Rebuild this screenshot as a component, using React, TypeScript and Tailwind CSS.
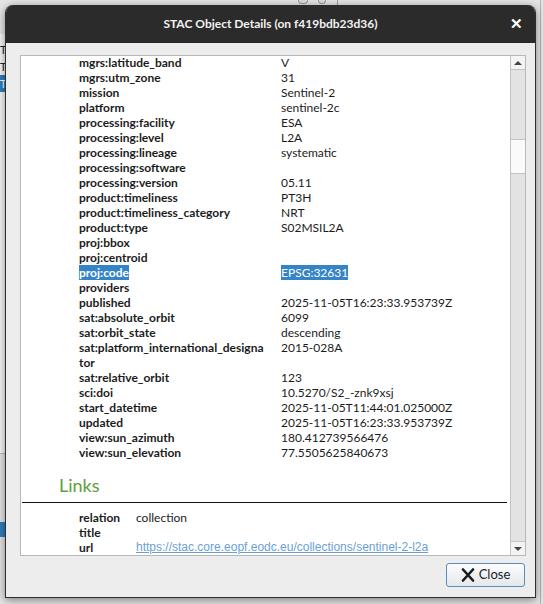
import React from 'react';

type Row = { key: string; value?: string; selected?: boolean; wrap?: [string, string] };

const rows: Row[] = [
  { key: 'mgrs:latitude_band', value: 'V' },
  { key: 'mgrs:utm_zone', value: '31' },
  { key: 'mission', value: 'Sentinel-2' },
  { key: 'platform', value: 'sentinel-2c' },
  { key: 'processing:facility', value: 'ESA' },
  { key: 'processing:level', value: 'L2A' },
  { key: 'processing:lineage', value: 'systematic' },
  { key: 'processing:software' },
  { key: 'processing:version', value: '05.11' },
  { key: 'product:timeliness', value: 'PT3H' },
  { key: 'product:timeliness_category', value: 'NRT' },
  { key: 'product:type', value: 'S02MSIL2A' },
  { key: 'proj:bbox' },
  { key: 'proj:centroid' },
  { key: 'proj:code', value: 'EPSG:32631', selected: true },
  { key: 'providers' },
  { key: 'published', value: '2025-11-05T16:23:33.953739Z' },
  { key: 'sat:absolute_orbit', value: '6099' },
  { key: 'sat:orbit_state', value: 'descending' },
  { key: 'sat:platform_international_designator', value: '2015-028A', wrap: ['sat:platform_international_designa', 'tor'] },
  { key: 'sat:relative_orbit', value: '123' },
  { key: 'sci:doi', value: '10.5270/S2_-znk9xsj' },
  { key: 'start_datetime', value: '2025-11-05T11:44:01.025000Z' },
  { key: 'updated', value: '2025-11-05T16:23:33.953739Z' },
  { key: 'view:sun_azimuth', value: '180.412739566476' },
  { key: 'view:sun_elevation', value: '77.5505625840673' },
];

function PropertyRow({ row }: { row: Row }) {
  const sel = row.selected ? 'bg-[#3584c6] text-white' : '';
  return (
    <div className="flex items-start">
      <div className="w-[202px] shrink-0 font-bold">
        {row.wrap ? (
          <>
            <div className="h-[15px]">{row.wrap[0]}</div>
            <div className="h-[15px]">{row.wrap[1]}</div>
          </>
        ) : (
          <span className={`inline-block h-[15px] ${sel}`}>{row.key}</span>
        )}
      </div>
      <div className="h-[15px]">
        {row.value ? <span className={`inline-block h-[15px] ${sel}`}>{row.value}</span> : null}
      </div>
    </div>
  );
}

function Scrollbar() {
  return (
    <div className="flex w-[15px] shrink-0 flex-col border-l border-[#c4c4c4] bg-[#e3e3e3]">
      <div className="flex h-[14px] items-center justify-center border-b border-[#c4c4c4] bg-[#f4f4f4]">
        <div className="h-0 w-0 border-x-[4px] border-b-[4px] border-x-transparent border-b-[#444]" />
      </div>
      <div className="h-[69px]" />
      <div className="h-[35px] border-y border-[#c4c4c4] bg-[#fafafa]" />
      <div className="flex-1" />
      <div className="flex h-[14px] items-center justify-center border-t border-[#c4c4c4] bg-[#f4f4f4]">
        <div className="h-0 w-0 border-x-[4px] border-t-[4px] border-x-transparent border-t-[#444]" />
      </div>
    </div>
  );
}

function CloseIcon() {
  return (
    <svg width="14" height="14" viewBox="0 0 14 14">
      <path d="M2 1.5 L12 12.5 M12 1.5 L2 12.5" stroke="#1a1a1a" strokeWidth="2.6" strokeLinecap="round" />
    </svg>
  );
}

export default function App() {
  return (
    <div className="relative h-[604px] w-[543px] overflow-hidden bg-[#e4e4e4] font-[Lato,sans-serif]">
      {/* window behind the dialog */}
      <div className="absolute left-0 top-[34px] h-[420px] w-[12px] border-b border-[#b9b9b9] bg-[#f6f6f6]">
        <div className="mt-[7px] text-[11px] leading-[17px] text-[#222]">T</div>
        <div className="text-[11px] leading-[17px] text-[#222]">T</div>
        <div className="bg-[#2f7ebd] text-[11px] leading-[17px] text-white">T</div>
      </div>
      <div className="absolute left-0 top-[522px] h-[15px] w-[8px] bg-[#2f7ebd]" />
      <div className="absolute left-[337px] top-0 h-[6px] w-px bg-[#9a9a9a]" />
      <div className="absolute left-[298px] top-0 h-[4px] w-[10px] rounded-b-sm border border-t-0 border-[#999] bg-[#ddd]" />
      <div className="absolute left-[318px] top-0 h-[4px] w-[8px] rounded-b-sm border border-t-0 border-[#999] bg-[#ddd]" />
      <div className="absolute left-[540px] top-[0px] h-[604px] w-px bg-[#b0b0b0]" />

      {/* dialog */}
      <div className="absolute left-[5px] top-[5px] flex h-[593px] w-[531px] flex-col overflow-hidden rounded-t-[8px] border-x border-b border-[#2e2e2e] bg-[#ededed] shadow-[0_2px_8px_rgba(0,0,0,0.45)]">
        <div className="relative flex h-[38px] shrink-0 items-center justify-center bg-[#2b2b2b]">
          <span className="text-[12px] font-bold text-[#f2f2f2]">STAC Object Details (on f419bdb23d36)</span>
          <span className="absolute right-[12px] top-[11px] text-[15px] font-bold leading-[15px] text-white">✕</span>
        </div>

        <div className="flex flex-1 flex-col pl-[14px] pr-[9px] pt-[12px]">
          <div className="flex h-[501px] border border-[#b8b8b8] bg-white">
            <div className="flex-1 overflow-hidden text-[12px] leading-[15px] text-[#1c1c1c]">
              <div className="-mt-px pl-[58px]">
                {rows.map((r) => (
                  <PropertyRow key={r.key} row={r} />
                ))}
              </div>
              <div className="mt-[14px] pl-[38px] text-[18px] leading-[22px] text-[#5d9e3c]">Links</div>
              <div className="ml-px mr-[3px] mt-[6px] h-px bg-[#111]" />
              <div className="mt-[7px] pl-[58px]">
                <div className="flex">
                  <div className="w-[57px] font-bold">relation</div>
                  <div>collection</div>
                </div>
                <div className="flex">
                  <div className="w-[57px] font-bold">title</div>
                </div>
                <div className="flex">
                  <div className="w-[57px] font-bold">url</div>
                  <a className="font-['Liberation_Sans',sans-serif] text-[12px] text-[#6a9fd6] underline">
                    https://stac.core.eopf.eodc.eu/collections/sentinel-2-l2a
                  </a>
                </div>
              </div>
            </div>
            <Scrollbar />
          </div>

          <div className="mt-[7px] flex justify-end pr-px">
            <button className="flex h-[24px] w-[79px] items-center justify-center gap-[4px] rounded-[3px] border border-[#5b8dbc] bg-gradient-to-b from-[#fbfcfd] to-[#e4e8ec] text-[13px] text-[#222]">
              <CloseIcon />
              <span>Close</span>
            </button>
          </div>
        </div>
      </div>
    </div>
  );
}
